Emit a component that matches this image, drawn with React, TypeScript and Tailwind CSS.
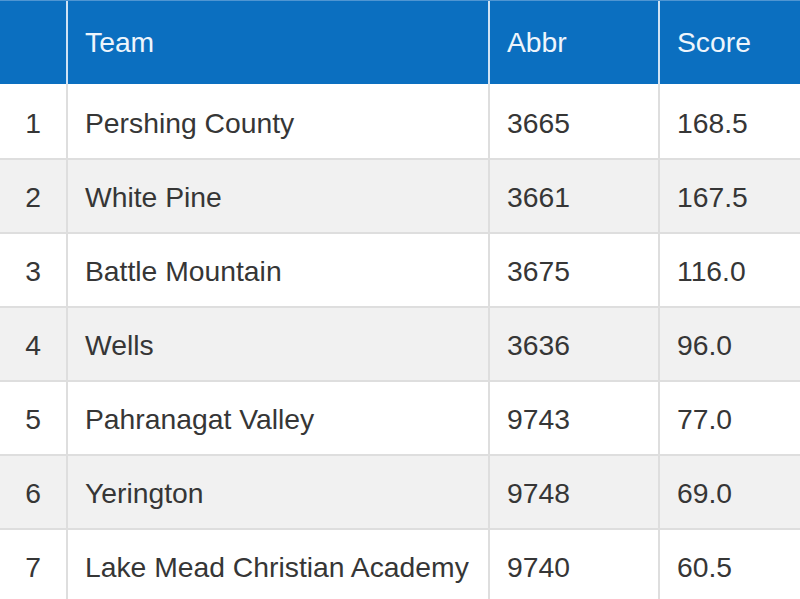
import React from "react";

const rows = [
  ["1", "Pershing County", "3665", "168.5"],
  ["2", "White Pine", "3661", "167.5"],
  ["3", "Battle Mountain", "3675", "116.0"],
  ["4", "Wells", "3636", "96.0"],
  ["5", "Pahranagat Valley", "9743", "77.0"],
  ["6", "Yerington", "9748", "69.0"],
  ["7", "Lake Mead Christian Academy", "9740", "60.5"],
];

export default function App() {
  return (
    <div
      className="w-[800px] h-[599px] overflow-hidden bg-white text-[28.3px] leading-none"
      style={{ fontFamily: '"Liberation Sans", Arial, sans-serif' }}
    >
      <div className="grid grid-cols-[68px_422px_170px_140px] h-[84px] bg-[#0b6fc0] border-t border-[#4f95d2] text-[#eef5fc]">
        <div className="border-r-2 border-[#cfe2f4]" />
        <div className="border-r-2 border-[#cfe2f4] flex items-center pl-[17px]">Team</div>
        <div className="border-r-2 border-[#cfe2f4] flex items-center pl-[17px]">Abbr</div>
        <div className="flex items-center pl-[17px]">Score</div>
      </div>
      {rows.map((r, i) => {
        const pt = i === 0 ? "pt-[4px]" : "pt-[2px]";
        return (
          <div
            key={r[0]}
            className={
              "grid grid-cols-[68px_422px_170px_140px] border-b-2 border-[#dedede] text-[#363636] " +
              (i === 0 ? "h-[76px] " : "h-[74px] ") +
              (i % 2 === 1 ? "bg-[#f1f1f1]" : "bg-white")
            }
          >
            <div className={"border-r-2 border-[#dedede] flex items-center justify-center " + pt}>{r[0]}</div>
            <div className={"border-r-2 border-[#dedede] flex items-center pl-[17px] whitespace-nowrap " + pt}>{r[1]}</div>
            <div className={"border-r-2 border-[#dedede] flex items-center pl-[17px] " + pt}>{r[2]}</div>
            <div className={"flex items-center pl-[17px] " + pt}>{r[3]}</div>
          </div>
        );
      })}
    </div>
  );
}
